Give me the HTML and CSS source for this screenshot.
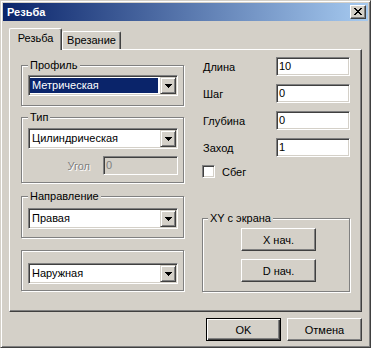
FILE: index.html
```html
<!DOCTYPE html>
<html lang="ru">
<head>
<meta charset="utf-8">
<title>Резьба</title>
<link rel="stylesheet" href="styles.css">
</head>
<body>
<div class="window">
  <div class="titlebar">
    <span class="title">Резьба</span>
    <span class="close-btn">
      <svg width="8" height="7" viewBox="0 0 8 7" shape-rendering="crispEdges"><path d="M0 0h2v1h-2zM6 0h2v1h-2zM1 1h2v1h-2zM5 1h2v1h-2zM2 2h4v1h-4zM3 3h2v1h-2zM2 4h4v1h-4zM1 5h2v1h-2zM5 5h2v1h-2zM0 6h2v1h-2zM6 6h2v1h-2z" fill="#000"/></svg>
    </span>
  </div>
  <div class="body">
    <div class="tabs">
      <div class="tab tab-active">Резьба</div>
      <div class="tab tab-inactive">Врезание</div>
    </div>
    <div class="panel">
      <div class="left">
        <div class="group g1">
          <span class="group-label">Профиль</span>
          <div class="combo">
            <span class="val val-selected">Метрическая</span>
            <span class="drop"><svg width="7" height="4" viewBox="0 0 7 4" shape-rendering="crispEdges"><path d="M0 0h7v1h-1v1h-1v1h-1v1h-1v-1h-1v-1h-1v-1h-1z" fill="#000"/></svg></span>
          </div>
        </div>
        <div class="group g2">
          <span class="group-label">Тип</span>
          <div class="combo">
            <span class="val">Цилиндрическая</span>
            <span class="drop"><svg width="7" height="4" viewBox="0 0 7 4" shape-rendering="crispEdges"><path d="M0 0h7v1h-1v1h-1v1h-1v1h-1v-1h-1v-1h-1v-1h-1z" fill="#000"/></svg></span>
          </div>
          <div class="angle-row">
            <span class="disabled-label">Угол</span>
            <span class="edit edit-disabled">0</span>
          </div>
        </div>
        <div class="group g3">
          <span class="group-label">Направление</span>
          <div class="combo">
            <span class="val">Правая</span>
            <span class="drop"><svg width="7" height="4" viewBox="0 0 7 4" shape-rendering="crispEdges"><path d="M0 0h7v1h-1v1h-1v1h-1v1h-1v-1h-1v-1h-1v-1h-1z" fill="#000"/></svg></span>
          </div>
        </div>
        <div class="group g4">
          <div class="combo">
            <span class="val">Наружная</span>
            <span class="drop"><svg width="7" height="4" viewBox="0 0 7 4" shape-rendering="crispEdges"><path d="M0 0h7v1h-1v1h-1v1h-1v1h-1v-1h-1v-1h-1v-1h-1z" fill="#000"/></svg></span>
          </div>
        </div>
      </div>
      <div class="right">
        <div class="fields">
          <span class="field-label">Длина</span><span class="edit">10</span>
          <span class="field-label">Шаг</span><span class="edit">0</span>
          <span class="field-label">Глубина</span><span class="edit">0</span>
          <span class="field-label">Заход</span><span class="edit">1</span>
        </div>
        <div class="check-row">
          <span class="checkbox"></span>
          <span class="check-label">Сбег</span>
        </div>
        <div class="group gxy">
          <span class="group-label">XY с экрана</span>
          <div class="btn btn-xy">X нач.</div>
          <div class="btn btn-xy btn-xy2">D нач.</div>
        </div>
      </div>
    </div>
    <div class="footer">
      <div class="btn btn-default">OK</div>
      <div class="btn">Отмена</div>
    </div>
  </div>
</div>
</body>
</html>
```

FILE: styles.css
```css
* { box-sizing: border-box; }

body {
  margin: 0;
  background: #d4d0c8;
  font-family: "Liberation Sans", Arial, sans-serif;
  font-size: 11px;
  color: #000;
}

.window {
  width: 371px;
  height: 348px;
  background: #d4d0c8;
  border: 1px solid;
  border-color: #d4d0c8 #404040 #404040 #d4d0c8;
  box-shadow: inset 1px 1px #fff, inset -1px -1px #808080;
  padding: 2px;
  display: flex;
  flex-direction: column;
}

.titlebar {
  height: 18px;
  background: linear-gradient(to right, #0a246a, #a6caf0);
  display: flex;
  align-items: center;
  justify-content: space-between;
  padding: 0 2px 0 4px;
}

.title {
  color: #fff;
  font-weight: bold;
  font-size: 11px;
}

.close-btn {
  width: 16px;
  height: 14px;
  background: #d4d0c8;
  border: 1px solid;
  border-color: #fff #404040 #404040 #fff;
  box-shadow: inset -1px -1px #808080;
  display: flex;
  align-items: center;
  justify-content: center;
  padding: 0 0 1px 0;
}

.close-btn svg { display: block; }

.body {
  flex: 1;
  display: flex;
  flex-direction: column;
}

.tabs {
  display: flex;
  align-items: flex-end;
  height: 21px;
  margin: 7px 0 0 6px;
}

.tab {
  background: #d4d0c8;
  border-top: 1px solid #fff;
  border-left: 1px solid #fff;
  border-right: 1px solid #404040;
  box-shadow: inset -1px 0 #808080;
  border-radius: 2px 2px 0 0;
  text-align: center;
  line-height: 13px;
}

.tab-active {
  width: 53px;
  height: 22px;
  margin-bottom: -1px;
  padding-top: 3px;
  position: relative;
  z-index: 1;
}

.tab-inactive {
  width: 59px;
  height: 18px;
  padding-top: 2px;
}

.panel {
  margin-left: 6px;
  width: 353px;
  height: 263px;
  border: 1px solid;
  border-color: #fff #404040 #404040 #fff;
  box-shadow: inset -1px -1px #808080;
  display: flex;
}

.left {
  padding: 15px 0 0 11px;
}

.right {
  margin-left: 18px;
  padding-top: 7px;
}

.group {
  position: relative;
  border: 1px solid #808080;
  box-shadow: inset 1px 1px #fff, 1px 1px #fff;
}

.left .group {
  width: 163px;
  padding-left: 6px;
}

.group-label {
  position: absolute;
  top: -7px;
  left: 6px;
  padding: 0 2px;
  background: #d4d0c8;
  line-height: 13px;
}

.g1 { height: 41px; padding-top: 9px; }
.g2 { height: 66px; padding-top: 10px; margin-top: 11px; }
.g3 { height: 42px; padding-top: 11px; margin-top: 13px; }
.g4 { height: 41px; padding-top: 12px; margin-top: 12px; }

.combo {
  width: 150px;
  height: 21px;
  background: #fff;
  border: 1px solid;
  border-color: #808080 #fff #fff #808080;
  box-shadow: inset 1px 1px #404040, inset -1px -1px #d4d0c8;
  padding: 1px;
  display: flex;
}

.val {
  flex: 1;
  margin: 1px 2px 0 0;
  height: 15px;
  line-height: 15px;
  padding-left: 2px;
  white-space: nowrap;
}

.val-selected {
  background: #0a246a;
  color: #fff;
}

.drop {
  width: 16px;
  height: 17px;
  background: #d4d0c8;
  border: 1px solid;
  border-color: #d4d0c8 #404040 #404040 #d4d0c8;
  box-shadow: inset 1px 1px #fff, inset -1px -1px #808080;
  display: flex;
  align-items: center;
  justify-content: center;
}

.drop svg { display: block; }

.angle-row {
  width: 150px;
  margin-top: 7px;
  display: flex;
  justify-content: flex-end;
  align-items: center;
}

.disabled-label {
  color: #808080;
  text-shadow: 1px 1px #fff;
  margin-right: 13px;
}

.edit {
  display: block;
  height: 19px;
  background: #fff;
  border: 1px solid;
  border-color: #808080 #fff #fff #808080;
  box-shadow: inset 1px 1px #404040, inset -1px -1px #d4d0c8;
  padding: 0 0 0 2px;
  line-height: 17px;
}

.edit-disabled {
  width: 75px;
  background: #d4d0c8;
  color: #808080;
}

.fields {
  display: grid;
  grid-template-columns: 74px 74px;
  row-gap: 8px;
  align-items: center;
}

.field-label {
  padding-left: 1px;
}

.check-row {
  margin-top: 8px;
  display: flex;
  align-items: center;
  height: 13px;
}

.checkbox {
  width: 13px;
  height: 13px;
  background: #fff;
  border: 1px solid;
  border-color: #808080 #fff #fff #808080;
  box-shadow: inset 1px 1px #404040, inset -1px -1px #d4d0c8;
}

.check-label {
  margin-left: 7px;
}

.gxy {
  width: 148px;
  height: 74px;
  margin-top: 40px;
  padding: 9px 0 0 38px;
}

.gxy .group-label { left: 5px; }

.btn {
  width: 75px;
  height: 23px;
  background: #d4d0c8;
  border: 1px solid;
  border-color: #fff #404040 #404040 #fff;
  box-shadow: inset -1px -1px #808080, inset 1px 1px #d4d0c8;
  display: flex;
  align-items: center;
  justify-content: center;
}

.btn-xy2 { margin-top: 8px; }

.btn-default {
  border: 1px solid #000;
  box-shadow: inset 1px 1px #fff, inset -1px -1px #404040, inset -2px -2px #808080;
}

.footer {
  display: flex;
  justify-content: flex-end;
  gap: 6px;
  margin-top: 6px;
  padding-right: 6px;
}
```
